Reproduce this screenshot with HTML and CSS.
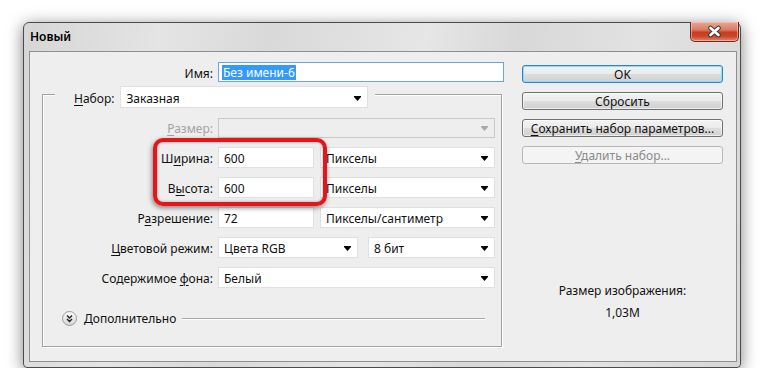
FILE: index.html
```html
<!DOCTYPE html>
<html lang="ru">
<head>
    <meta charset="UTF-8">
    <meta name="viewport" content="width=device-width, initial-scale=1.0">
    <title>Новый</title>
    <link rel="stylesheet" href="styles.css">
</head>

<body>
    <div class="window">
        <div class="titlebar">
            <span class="title">Новый</span>
            <span class="close-btn" title="Закрыть">
                <svg width="17" height="13" viewBox="0 0 17 13">
                    <path d="M4.5 3 12.5 10M12.5 3 4.5 10" stroke="#3b3b3b" stroke-width="4.6" stroke-linecap="round"/>
                    <path d="M4.5 3 12.5 10M12.5 3 4.5 10" stroke="#fff" stroke-width="2.6" stroke-linecap="round"/>
                </svg>
            </span>
        </div>

        <div class="client">
            <div class="main">
                <div class="name-row">
                    <span class="lbl">Имя:</span>
                    <div class="field name-field"><span class="sel">Без имени-6</span></div>
                </div>

                <div class="group">
                    <div class="group-head">
                        <span class="lbl"><u>Н</u>абор:</span>
                        <div class="combo preset">
                            <span>Заказная</span>
                            <svg class="arrow" width="7" height="5" viewBox="0 0 7 5"><path d="M0 0h7v1L3.5 5 0 1z"/></svg>
                        </div>
                    </div>

                    <div class="form">
                        <span class="lbl off"><u>Р</u>азмер:</span>
                        <div class="combo disabled">
                            <span></span>
                            <svg class="arrow" width="7" height="5" viewBox="0 0 7 5"><path d="M0 0h7v1L3.5 5 0 1z"/></svg>
                        </div>

                        <span class="lbl">Ш<u>и</u>рина:</span>
                        <div class="pair">
                            <div class="field short">600</div>
                            <div class="combo">
                                <span>Пикселы</span>
                                <svg class="arrow" width="7" height="5" viewBox="0 0 7 5"><path d="M0 0h7v1L3.5 5 0 1z"/></svg>
                            </div>
                        </div>

                        <span class="lbl">В<u>ы</u>сота:</span>
                        <div class="pair">
                            <div class="field short">600</div>
                            <div class="combo">
                                <span>Пикселы</span>
                                <svg class="arrow" width="7" height="5" viewBox="0 0 7 5"><path d="M0 0h7v1L3.5 5 0 1z"/></svg>
                            </div>
                        </div>

                        <span class="lbl">Р<u>а</u>зрешение:</span>
                        <div class="pair">
                            <div class="field short">72</div>
                            <div class="combo">
                                <span>Пикселы/сантиметр</span>
                                <svg class="arrow" width="7" height="5" viewBox="0 0 7 5"><path d="M0 0h7v1L3.5 5 0 1z"/></svg>
                            </div>
                        </div>

                        <span class="lbl"><u>Ц</u>ветовой режим:</span>
                        <div class="pair wide-gap">
                            <div class="combo mode">
                                <span>Цвета RGB</span>
                                <svg class="arrow" width="7" height="5" viewBox="0 0 7 5"><path d="M0 0h7v1L3.5 5 0 1z"/></svg>
                            </div>
                            <div class="combo">
                                <span>8 бит</span>
                                <svg class="arrow" width="7" height="5" viewBox="0 0 7 5"><path d="M0 0h7v1L3.5 5 0 1z"/></svg>
                            </div>
                        </div>

                        <span class="lbl">Содержимое <u>ф</u>она:</span>
                        <div class="combo">
                            <span>Белый</span>
                            <svg class="arrow" width="7" height="5" viewBox="0 0 7 5"><path d="M0 0h7v1L3.5 5 0 1z"/></svg>
                        </div>
                    </div>

                    <div class="more">
                        <span class="more-icon">
                            <svg width="15" height="15" viewBox="0 0 15 15">
                                <defs>
                                    <linearGradient id="knob" x1="0" y1="0" x2="0" y2="1">
                                        <stop offset="0" stop-color="#ffffff"/>
                                        <stop offset="1" stop-color="#d4d4d4"/>
                                    </linearGradient>
                                </defs>
                                <circle cx="7.5" cy="7.5" r="7" fill="url(#knob)" stroke="#9b9b9b"/>
                                <path d="M5 4.5 7.5 7 10 4.5M5 8 7.5 10.5 10 8" fill="none" stroke="#222" stroke-width="1.4"/>
                            </svg>
                        </span>
                        <span>Дополнительно</span>
                        <span class="more-line"></span>
                    </div>

                    <div class="callout"></div>
                </div>
            </div>

            <div class="side">
                <div class="btn default">OK</div>
                <div class="btn">Сбросить</div>
                <div class="btn"><u>С</u>охранить набор параметров...</div>
                <div class="btn off"><u>У</u>далить набор...</div>

                <div class="info">
                    <p>Размер изображения:</p>
                    <p>1,03M</p>
                </div>
            </div>
        </div>
    </div>
</body>
</html>
```

FILE: styles.css
```css
body {
    margin: 0;
    background: #ffffff;
    font-family: "Noto Sans", "Open Sans", sans-serif;
    font-size: 12px;
    color: #111;
}

p {
    margin: 0;
}

u {
    text-decoration-thickness: 1px;
    text-underline-offset: 2px;
}

.window {
    box-sizing: border-box;
    width: 718px;
    height: 346px;
    margin: 22px 0 0 23px;
    border: 1px solid #4b4b4b;
    border-radius: 6px 6px 4px 4px;
    background: linear-gradient(100deg, #d6d6d6 0%, #e4e4e4 18%, #d9d9d9 32%, #e6e6e6 52%, #d8d8d8 64%, #e2e2e2 80%, #d7d7d7 100%);
    box-shadow: 0 3px 16px rgba(0, 0, 0, 0.5);
    display: flex;
    flex-direction: column;
}

.titlebar {
    height: 28px;
    display: flex;
    justify-content: space-between;
    align-items: flex-start;
    padding-left: 6px;
}

.title {
    line-height: 28px;
    font-weight: 600;
    color: #000;
}

.close-btn {
    box-sizing: border-box;
    width: 49px;
    height: 20px;
    margin: -1px 1px 0 0;
    border: 1px solid #6e2a1e;
    border-top: none;
    border-radius: 0 0 5px 5px;
    background: linear-gradient(#e9a796 0%, #dc7d66 40%, #c63e21 55%, #c9452a 75%, #de8a74 100%);
    box-shadow: inset 0 0 0 1px rgba(255, 210, 200, 0.5);
    display: flex;
    align-items: center;
    justify-content: center;
}

.client {
    flex: 1;
    margin: 0 3px 5px 5px;
    border: 1px solid #8e8f8f;
    background: #eeeeee;
    display: flex;
    padding: 10px 0 0 12px;
}

.main {
    width: 462px;
}

.lbl {
    text-align: right;
    white-space: nowrap;
    padding-top: 2px;
}

.lbl.off {
    color: #a3a3a3;
}

.name-row {
    display: flex;
    align-items: center;
    gap: 5px;
    height: 20px;
}

.name-row .lbl {
    width: 171px;
}

.field,
.combo {
    box-sizing: border-box;
    height: 21px;
    background: #fff;
    border: 1px solid #e0e0e0;
    display: flex;
    align-items: center;
    padding: 2px 5px 0;
}

.name-field {
    flex: 1;
    height: 20px;
    border-color: #6aa5e2;
    padding: 1px 0 0 3px;
}

.sel {
    background: #3399ff;
    color: #fff;
    padding: 0 1px;
    line-height: 15px;
}

.combo {
    justify-content: space-between;
    padding-right: 6px;
}

.combo.disabled {
    height: 20px;
    background: #eeeeee;
    border-color: #c8c8c8;
    fill: #a8a8a8;
}

.arrow {
    flex-shrink: 0;
}

.group {
    position: relative;
    box-sizing: border-box;
    width: 460px;
    height: 253px;
    margin-top: 12px;
    border: 1px solid #a3a3a3;
    box-shadow: inset 1px 1px 0 #ffffff, 1px 1px 0 #ffffff;
}

.group-head {
    display: flex;
    align-items: center;
    gap: 6px;
    width: fit-content;
    height: 22px;
    margin: -9px 0 0 12px;
    padding: 0 7px 0 19px;
    background: #eeeeee;
}

.preset {
    width: 248px;
    height: 22px;
}

.form {
    display: grid;
    grid-template-columns: 170px 277px;
    grid-auto-rows: 21px;
    column-gap: 5px;
    row-gap: 9px;
    align-items: center;
    margin-top: 9px;
}

.pair {
    display: flex;
    gap: 6px;
}

.pair .combo {
    flex: 1;
}

.short {
    width: 96px;
}

.wide-gap {
    gap: 10px;
}

.mode {
    flex: 0 0 140px !important;
}

.more {
    display: flex;
    align-items: center;
    gap: 7px;
    height: 16px;
    margin-top: 22px;
    padding: 0 16px 0 19px;
}

.more-icon {
    display: flex;
}

.more-line {
    flex: 1;
    height: 1px;
    margin-left: -1px;
    background: #a8a8a8;
    box-shadow: 0 1px 0 #ffffff;
}

.callout {
    position: absolute;
    left: 110px;
    top: 43px;
    box-sizing: border-box;
    width: 174px;
    height: 68px;
    border: 4px solid #e8141c;
    border-radius: 10px;
    box-shadow: -1px 2px 5px rgba(0, 0, 0, 0.45), inset 0 0 3px rgba(0, 0, 0, 0.35);
}

.side {
    width: 201px;
    margin: 3px 0 0 18px;
}

.btn {
    box-sizing: border-box;
    height: 18px;
    margin-bottom: 9px;
    border: 1px solid #707070;
    border-radius: 3px;
    background: linear-gradient(#f3f3f3 0%, #ebebeb 48%, #dddddd 52%, #d0d0d0 100%);
    box-shadow: inset 0 0 0 1px rgba(255, 255, 255, 0.6);
    text-align: center;
    line-height: 17px;
    white-space: nowrap;
}

.btn.default {
    border-color: #2d86cc;
    box-shadow: inset 0 0 0 1px #8fdcf8;
}

.btn.off {
    margin-bottom: 0;
    border-color: #b8b8b8;
    background: #f4f4f4;
    box-shadow: none;
    color: #8a8a8a;
}

.info {
    margin-top: 116px;
    text-align: center;
    line-height: 22px;
}
```
